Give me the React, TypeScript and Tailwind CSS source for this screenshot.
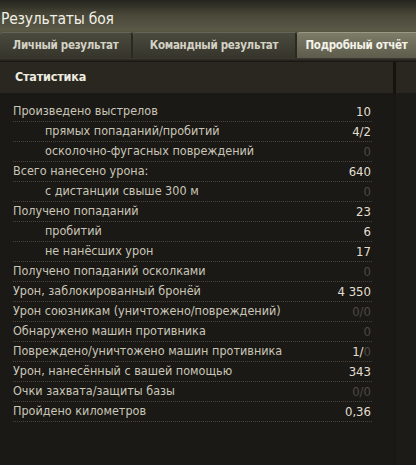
import React from "react";

type Row = { label: string; value: string; indent?: boolean; dim?: boolean; parts?: { t: string; dim?: boolean }[] };

const rows: Row[] = [
  { label: "Произведено выстрелов", value: "10" },
  { label: "прямых попаданий/пробитий", value: "4/2", indent: true },
  { label: "осколочно-фугасных повреждений", value: "0", indent: true, dim: true },
  { label: "Всего нанесено урона:", value: "640" },
  { label: "с дистанции свыше 300 м", value: "0", indent: true, dim: true },
  { label: "Получено попаданий", value: "23" },
  { label: "пробитий", value: "6", indent: true },
  { label: "не нанёсших урон", value: "17", indent: true },
  { label: "Получено попаданий осколками", value: "0", dim: true },
  { label: "Урон, заблокированный бронёй", value: "4 350" },
  { label: "Урон союзникам (уничтожено/повреждений)", value: "0/0", dim: true },
  { label: "Обнаружено машин противника", value: "0", dim: true },
  { label: "Повреждено/уничтожено машин противника", value: "", parts: [{ t: "1/" }, { t: "0", dim: true }] },
  { label: "Урон, нанесённый с вашей помощью", value: "343" },
  { label: "Очки захвата/защиты базы", value: "0/0", dim: true },
  { label: "Пройдено километров", value: "0,36" },
];

export default function App() {
  return (
    <div
      className="w-[416px] h-[465px] overflow-hidden bg-[#1b1915] flex flex-col"
      style={{ fontFamily: '"DejaVu Sans Condensed", "Roboto", sans-serif' }}
    >
      <div className="h-[31px] shrink-0 bg-gradient-to-b from-[#26251e] via-[#4a4939] to-[#5b5a49] flex items-end pb-[4px]">
        <span className="text-[15.5px] tracking-[-0.2px] leading-none text-[#f2f0e6] pl-[1px]">Результаты боя</span>
      </div>
      <div className="h-[27px] shrink-0 bg-[#55543f] flex items-end">
        <div className="w-[133px] h-[26px] rounded-t-[3px] bg-gradient-to-b from-[#4b4a3e] to-[#36352c] border-t border-r-2 border-t-[#66655a] border-r-[#2b2a22] flex items-center justify-center text-[11.5px] tracking-[-0.3px] whitespace-nowrap font-bold text-[#d4d2c4]">
          Личный результат
        </div>
        <div className="w-[164px] h-[26px] rounded-t-[3px] bg-gradient-to-b from-[#4b4a3e] to-[#36352c] border-t border-r-2 border-t-[#66655a] border-r-[#2b2a22] flex items-center justify-center text-[11.5px] tracking-[-0.3px] whitespace-nowrap font-bold text-[#d4d2c4]">
          Командный результат
        </div>
        <div className="flex-1 h-[26px] rounded-tl-[3px] bg-gradient-to-b from-[#7d7c68] to-[#5d5c4c] border-t border-[#9a9985] flex items-center justify-center text-[11.5px] tracking-[-0.3px] whitespace-nowrap font-bold text-[#f4f2e8]">
          Подробный отчёт
        </div>
      </div>
      <div className="h-[4px] shrink-0 bg-gradient-to-b from-[#3d3c33] to-[#141310]" />
      <div className="h-[31px] shrink-0 flex">
        <div className="w-[393px] bg-[#29271f] flex items-center pl-[15px] text-[12.5px] tracking-[-0.2px] font-bold text-[#eeebe0]">
          Статистика
        </div>
        <div className="w-[3px] bg-[#141310]" />
        <div className="flex-1 bg-[#29271f]" />
      </div>
      <div className="flex-1 flex">
        <div className="w-[393px] pt-[9px]">
          {rows.map((r, i) => (
            <div
              key={i}
              className="ml-[13px] w-[359px] h-[20px] flex items-center justify-between border-b border-dotted border-[#45433b] text-[12.5px] leading-none"
            >
              <span className={(r.indent ? "pl-[32px] " : "") + "text-[#c9c6b8] whitespace-nowrap"}>{r.label}</span>
              {r.parts ? (
                <span className="pr-[1px] text-[13px]">
                  {r.parts.map((p, j) => (
                    <span key={j} className={p.dim ? "text-[#4b4943]" : "text-[#e2dfd2]"}>
                      {p.t}
                    </span>
                  ))}
                </span>
              ) : (
                <span className={(r.dim ? "text-[#4b4943]" : "text-[#e2dfd2]") + " pr-[1px] text-[13px]"}>{r.value}</span>
              )}
            </div>
          ))}
        </div>
        <div className="w-[3px] bg-[#181713]" />
        <div className="flex-1 bg-[#1d1b17]" />
      </div>
    </div>
  );
}
